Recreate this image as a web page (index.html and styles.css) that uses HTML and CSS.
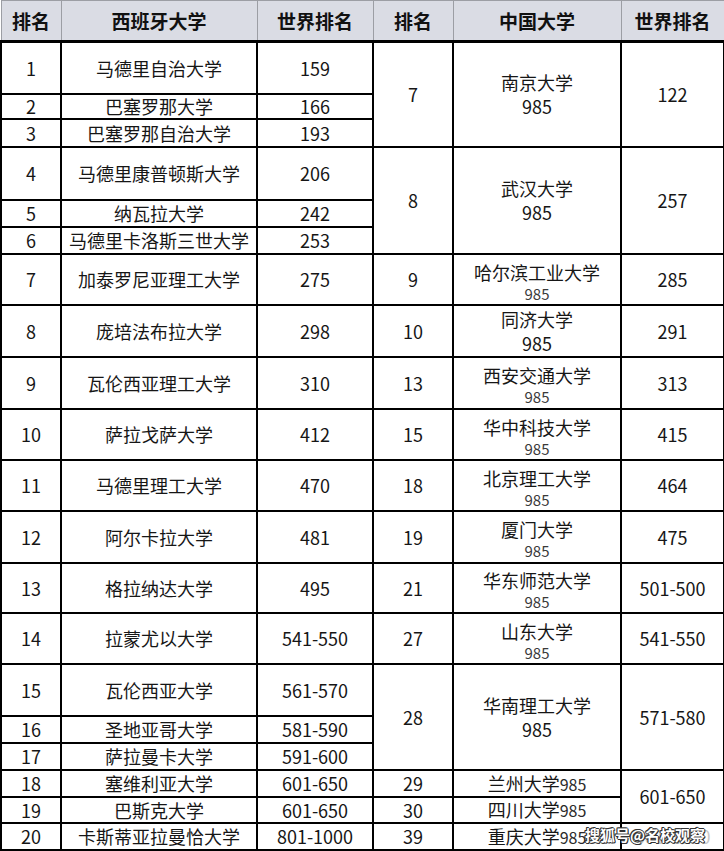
FILE: index.html
```html
<!DOCTYPE html>
<html lang="zh-CN">
<head>
<meta charset="utf-8">
<title>西班牙大学与中国大学排名</title>
<link rel="stylesheet" href="styles.css">
</head>
<body>
<div class="page">
<table class="rank">
  <colgroup>
    <col class="c1"><col class="c2"><col class="c3"><col class="c4"><col class="c5"><col class="c6">
  </colgroup>
  <thead>
    <tr class="h-head">
      <th>排名</th><th>西班牙大学</th><th>世界排名</th><th>排名</th><th>中国大学</th><th>世界排名</th>
    </tr>
  </thead>
  <tbody>
    <tr class="h52"><td>1</td><td>马德里自治大学</td><td>159</td>
      <td rowspan="3">7</td><td rowspan="3"><div class="nm">南京大学</div><div class="big985">985</div></td><td rowspan="3">122</td></tr>
    <tr class="h25"><td>2</td><td>巴塞罗那大学</td><td>166</td></tr>
    <tr class="h28"><td>3</td><td>巴塞罗那自治大学</td><td>193</td></tr>

    <tr class="h53"><td>4</td><td>马德里康普顿斯大学</td><td>206</td>
      <td rowspan="3">8</td><td rowspan="3"><div class="nm">武汉大学</div><div class="big985">985</div></td><td rowspan="3">257</td></tr>
    <tr class="h27"><td>5</td><td>纳瓦拉大学</td><td>242</td></tr>
    <tr class="h27"><td>6</td><td>马德里卡洛斯三世大学</td><td>253</td></tr>

    <tr class="h51"><td>7</td><td>加泰罗尼亚理工大学</td><td>275</td>
      <td>9</td><td><div class="nm">哈尔滨工业大学</div><div class="sm985">985</div></td><td>285</td></tr>
    <tr class="h52"><td>8</td><td>庞培法布拉大学</td><td>298</td>
      <td>10</td><td><div class="nm">同济大学</div><div class="big985">985</div></td><td>291</td></tr>
    <tr class="h52"><td>9</td><td>瓦伦西亚理工大学</td><td>310</td>
      <td>13</td><td><div class="nm">西安交通大学</div><div class="sm985">985</div></td><td>313</td></tr>
    <tr class="h51"><td>10</td><td>萨拉戈萨大学</td><td>412</td>
      <td>15</td><td><div class="nm">华中科技大学</div><div class="sm985">985</div></td><td>415</td></tr>
    <tr class="h51"><td>11</td><td>马德里理工大学</td><td>470</td>
      <td>18</td><td><div class="nm">北京理工大学</div><div class="sm985">985</div></td><td>464</td></tr>
    <tr class="h52"><td>12</td><td>阿尔卡拉大学</td><td>481</td>
      <td>19</td><td><div class="nm">厦门大学</div><div class="sm985">985</div></td><td>475</td></tr>
    <tr class="h50"><td>13</td><td>格拉纳达大学</td><td>495</td>
      <td>21</td><td><div class="nm">华东师范大学</div><div class="sm985">985</div></td><td>501-500</td></tr>
    <tr class="h51"><td>14</td><td>拉蒙尤以大学</td><td>541-550</td>
      <td>27</td><td><div class="nm">山东大学</div><div class="sm985">985</div></td><td>541-550</td></tr>

    <tr class="h52"><td>15</td><td>瓦伦西亚大学</td><td>561-570</td>
      <td rowspan="3">28</td><td rowspan="3"><div class="nm">华南理工大学</div><div class="big985">985</div></td><td rowspan="3">571-580</td></tr>
    <tr class="h27"><td>16</td><td>圣地亚哥大学</td><td>581-590</td></tr>
    <tr class="h27"><td>17</td><td>萨拉曼卡大学</td><td>591-600</td></tr>

    <tr class="h27"><td>18</td><td>塞维利亚大学</td><td>601-650</td>
      <td>29</td><td>兰州大学<span class="in985">985</span></td><td rowspan="2">601-650</td></tr>
    <tr class="h26"><td>19</td><td>巴斯克大学</td><td>601-650</td>
      <td>30</td><td>四川大学<span class="in985">985</span></td></tr>
    <tr class="h27"><td>20</td><td>卡斯蒂亚拉曼恰大学</td><td>801-1000</td>
      <td>39</td><td>重庆大学<span class="in985">985</span></td><td class="hidden-cell">801-1000</td></tr>
  </tbody>
</table>
<div class="watermark">搜狐号@名校观察</div>
</div>
</body>
</html>
```
FILE: styles.css
```css
html, body {
  margin: 0;
  padding: 0;
  background: #ffffff;
}

.page {
  position: relative;
  width: 724px;
  height: 851px;
  overflow: hidden;
}

.rank {
  border-collapse: collapse;
  table-layout: fixed;
  width: 723px;
  font-family: "Noto Sans CJK SC", "Noto Sans", sans-serif;
  color: #161616;
}

.c1 { width: 60px; }
.c2 { width: 196px; }
.c3 { width: 116px; }
.c4 { width: 80px; }
.c5 { width: 168px; }
.c6 { width: 103px; }

.rank th,
.rank td {
  padding: 0;
  text-align: center;
  vertical-align: middle;
  white-space: nowrap;
  overflow: hidden;
}

.rank td {
  border: 2px solid #000000;
  font-size: 18px;
  line-height: 22px;
}

.rank th {
  background: #dadce4;
  border: 1px solid #9c9ea4;
  border-bottom: 3px solid #000000;
  font-size: 19px;
  font-weight: 700;
  color: #111111;
}

.h-head { height: 41px; }
.h25 { height: 25px; }
.h26 { height: 26px; }
.h27 { height: 27px; }
.h28 { height: 28px; }
.h50 { height: 50px; }
.h51 { height: 51px; }
.h52 { height: 52px; }
.h53 { height: 53px; }

.nm {
  font-size: 18px;
  line-height: 24px;
}

.big985 {
  font-size: 18px;
  line-height: 24px;
}

.sm985 {
  font-size: 15px;
  line-height: 19px;
  color: #3a3a3a;
  margin-bottom: -4px;
}

.in985 {
  font-size: 16px;
  color: #2a2a2a;
}

.hidden-cell {
  color: #c8c8c8;
}

.watermark {
  position: absolute;
  left: 585px;
  top: 825px;
  font-family: "Noto Sans CJK SC", sans-serif;
  font-size: 15px;
  line-height: 20px;
  font-weight: 700;
  color: #ffffff;
  text-shadow: -1px 0 #333, 1px 0 #333, 0 -1px #333, 0 1px #333, 1px 1px #333, -1px -1px #333;
  white-space: nowrap;
}
```
